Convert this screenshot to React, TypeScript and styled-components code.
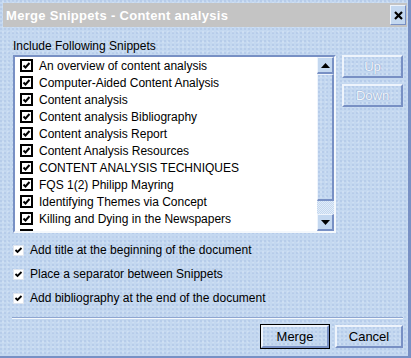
import styled, { createGlobalStyle } from "styled-components";

const GlobalStyle = createGlobalStyle`
  html, body {
    margin: 0;
    padding: 0;
    background: #c4d8f0;
  }
  * {
    box-sizing: border-box;
  }
`;

const snippets = [
  "An overview of content analysis",
  "Computer-Aided Content Analysis",
  "Content analysis",
  "Content analysis Bibliography",
  "Content analysis Report",
  "Content Analysis Resources",
  "CONTENT ANALYSIS TECHNIQUES",
  "FQS 1(2) Philipp Mayring",
  "Identifying Themes via Concept",
  "Killing and Dying in the Newspapers",
  "Semantic Content Analysis",
];

const options = [
  "Add title at the beginning of the document",
  "Place a separator between Snippets",
  "Add bibliography at the end of the document",
];

// faint speckled texture of the skin
const dots = `
  background-color: #c4d8f0;
  background-image:
    radial-gradient(circle at 1px 1px, rgba(150, 176, 220, 0.45) 0.6px, transparent 0.9px),
    radial-gradient(circle at 3px 2px, rgba(220, 232, 246, 0.6) 0.6px, transparent 0.9px);
  background-size: 4px 4px, 5px 5px;
`;

const Window = styled.div`
  width: 411px;
  height: 358px;
  ${dots}
  border-right: 3px solid #7890c4;
  border-bottom: 2px solid #7890c4;
  padding: 3px 1px 0 3px;
  display: flex;
  flex-direction: column;
  font-family: "Liberation Sans", Arial, sans-serif;
  font-size: 12px;
  color: #000;
`;

const TitleBar = styled.div`
  height: 24px;
  background: #c4c4c4;
  display: flex;
  align-items: center;
  justify-content: space-between;
  padding: 0 1px 0 3px;
`;

const Title = styled.span`
  color: #fff;
  font-weight: bold;
  font-size: 13px;
  letter-spacing: 0.3px;
`;

const CloseButton = styled.div`
  width: 16px;
  height: 20px;
  background: #c4d8f0;
  border-top: 1px solid #eef4fc;
  border-left: 1px solid #eef4fc;
  border-right: 1px solid #7890c4;
  border-bottom: 1px solid #7890c4;
  display: flex;
  align-items: center;
  justify-content: center;
`;

const Body = styled.div`
  flex: 1;
  display: flex;
  flex-direction: column;
  padding: 11px 4px 0 10px;
`;

const Label = styled.div`
  height: 17px;
  line-height: 17px;
`;

const TopRow = styled.div`
  display: flex;
  gap: 6px;
`;

const ListBox = styled.div`
  width: 325px;
  height: 178px;
  background: #fff;
  border-top: 2px solid #7890c4;
  border-left: 2px solid #7890c4;
  border-right: 2px solid #f4f8fc;
  border-bottom: 2px solid #f4f8fc;
  display: flex;
  overflow: hidden;
`;

const Items = styled.div`
  flex: 1;
  overflow: hidden;
  padding-left: 5px;
`;

const Item = styled.div`
  height: 17px;
  display: flex;
  align-items: center;
  gap: 6px;
  white-space: nowrap;
`;

const ScrollBar = styled.div`
  width: 17px;
  display: flex;
  flex-direction: column;
  ${dots}
`;

const ScrollButton = styled.div`
  height: 17px;
  background: #c4d8f0;
  border-top: 1px solid #eef4fc;
  border-left: 1px solid #eef4fc;
  border-right: 2px solid #7890c4;
  border-bottom: 2px solid #7890c4;
  display: flex;
  align-items: center;
  justify-content: center;
`;

const Thumb = styled.div`
  height: 127px;
  ${dots}
  border-top: 1px solid #eef4fc;
  border-left: 1px solid #eef4fc;
  border-right: 2px solid #7890c4;
  border-bottom: 2px solid #7890c4;
`;

const Track = styled.div`
  flex: 1;
  background-color: #e2ecf8;
  background-image: linear-gradient(45deg, #c4d8f0 25%, transparent 25%, transparent 75%, #c4d8f0 75%),
    linear-gradient(45deg, #c4d8f0 25%, transparent 25%, transparent 75%, #c4d8f0 75%);
  background-size: 2px 2px;
  background-position: 0 0, 1px 1px;
`;

const SideButtons = styled.div`
  display: flex;
  flex-direction: column;
  gap: 6px;
`;

const RaisedButton = styled.div<{ $disabled?: boolean; $default?: boolean; $w: number }>`
  width: ${(p) => p.$w}px;
  height: 23px;
  ${dots}
  border-top: 2px solid #eef4fc;
  border-left: 2px solid #eef4fc;
  border-right: 2px solid #7890c4;
  border-bottom: 2px solid #7890c4;
  outline: ${(p) => (p.$default ? "1px solid #000" : "none")};
  display: flex;
  align-items: center;
  justify-content: center;
  font-size: 13px;
  color: ${(p) => (p.$disabled ? "#f2f6fb" : "#000")};
  text-shadow: ${(p) =>
    p.$disabled ? "0 0 1px #8aa2cc, 0 0 1px #8aa2cc" : "none"};
`;

const Options = styled.div`
  display: flex;
  flex-direction: column;
  gap: 8px;
  margin-top: 9px;
`;

const Option = styled.div`
  height: 16px;
  display: flex;
  align-items: center;
  gap: 6px;
  white-space: nowrap;
`;

const Separator = styled.div`
  margin-top: 11px;
  margin-left: -1px;
  height: 2px;
  border-top: 1px solid #8ea6d0;
  border-bottom: 1px solid #f4f8fc;
  width: 391px;
`;

const Footer = styled.div`
  display: flex;
  justify-content: flex-end;
  gap: 6px;
  margin-top: 6px;
`;

function ListCheck() {
  return (
    <svg width="13" height="13" viewBox="0 0 13 13">
      <rect x="1" y="1" width="11" height="11" fill="#fff" stroke="#000" strokeWidth="2" />
      <path d="M3.5 6.5 L5.5 8.5 L9.5 4" fill="none" stroke="#000" strokeWidth="2" />
    </svg>
  );
}

function OptionCheck() {
  return (
    <svg width="11" height="11" viewBox="0 0 11 11">
      <rect x="0.5" y="0.5" width="10" height="10" fill="#fff" stroke="#dfe5ee" />
      <path d="M2.5 5 L4.5 7 L8.5 3" fill="none" stroke="#000" strokeWidth="1.8" />
    </svg>
  );
}

function Arrow({ down }: { down?: boolean }) {
  return (
    <svg width="9" height="5" viewBox="0 0 9 5">
      <path d={down ? "M0 0 H9 L4.5 5 Z" : "M0 5 H9 L4.5 0 Z"} fill="#000" />
    </svg>
  );
}

export default function App() {
  return (
    <>
      <GlobalStyle />
      <Window>
        <TitleBar>
          <Title>Merge Snippets - Content analysis</Title>
          <CloseButton>
            <svg width="9" height="9" viewBox="0 0 9 9">
              <path d="M1 1 L8 8 M8 1 L1 8" stroke="#000" strokeWidth="2.2" />
            </svg>
          </CloseButton>
        </TitleBar>
        <Body>
          <Label>Include Following Snippets</Label>
          <TopRow>
            <ListBox>
              <Items>
                {snippets.map((s) => (
                  <Item key={s}>
                    <ListCheck />
                    <span>{s}</span>
                  </Item>
                ))}
              </Items>
              <ScrollBar>
                <ScrollButton>
                  <Arrow />
                </ScrollButton>
                <Thumb />
                <Track />
                <ScrollButton>
                  <Arrow down />
                </ScrollButton>
              </ScrollBar>
            </ListBox>
            <SideButtons>
              <RaisedButton $w={61} $disabled>
                Up
              </RaisedButton>
              <RaisedButton $w={61} $disabled>
                Down
              </RaisedButton>
            </SideButtons>
          </TopRow>
          <Options>
            {options.map((o) => (
              <Option key={o}>
                <OptionCheck />
                <span>{o}</span>
              </Option>
            ))}
          </Options>
          <Separator />
          <Footer>
            <RaisedButton $w={68} $default>
              Merge
            </RaisedButton>
            <RaisedButton $w={68}>Cancel</RaisedButton>
          </Footer>
        </Body>
      </Window>
    </>
  );
}
